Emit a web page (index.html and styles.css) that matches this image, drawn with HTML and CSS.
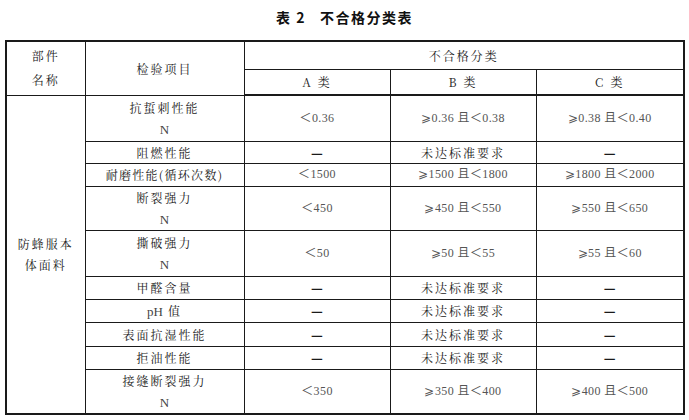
FILE: index.html
```html
<!DOCTYPE html>
<html lang="zh">
<head>
<meta charset="utf-8">
<title>不合格分类表</title>
<link rel="stylesheet" href="styles.css">
</head>
<body>
<h1 class="title">表 2&nbsp;&nbsp;&nbsp;不合格分类表</h1>
<table class="grid">
  <colgroup>
    <col class="c-part"><col class="c-item"><col class="c-a"><col class="c-b"><col class="c-c">
  </colgroup>
  <thead>
    <tr class="h1">
      <th rowspan="2" class="head-two">部件<br>名称</th>
      <th rowspan="2">检验项目</th>
      <th colspan="3">不合格分类</th>
    </tr>
    <tr class="h2">
      <th>A 类</th><th>B 类</th><th>C 类</th>
    </tr>
  </thead>
  <tbody>
    <tr class="r-47">
      <td rowspan="10" class="part two">防蜂服本<br>体面料</td>
      <td class="item two">抗蜇刺性能<br><span class="lat">N</span></td>
      <td class="num">＜0.36</td>
      <td class="num">⩾0.36 且＜0.38</td>
      <td class="num">⩾0.38 且＜0.40</td>
    </tr>
    <tr class="r-22">
      <td class="item">阻燃性能</td>
      <td class="dash">—</td>
      <td class="item">未达标准要求</td>
      <td class="dash">—</td>
    </tr>
    <tr class="r-23">
      <td class="item tight">耐磨性能(循环次数)</td>
      <td class="num">＜1500</td>
      <td class="num">⩾1500 且＜1800</td>
      <td class="num">⩾1800 且＜2000</td>
    </tr>
    <tr class="r-45">
      <td class="item two">断裂强力<br><span class="lat">N</span></td>
      <td class="num">＜450</td>
      <td class="num">⩾450 且＜550</td>
      <td class="num">⩾550 且＜650</td>
    </tr>
    <tr class="r-47b">
      <td class="item two">撕破强力<br><span class="lat">N</span></td>
      <td class="num">＜50</td>
      <td class="num">⩾50 且＜55</td>
      <td class="num">⩾55 且＜60</td>
    </tr>
    <tr class="r-23">
      <td class="item">甲醛含量</td>
      <td class="dash">—</td>
      <td class="item">未达标准要求</td>
      <td class="dash">—</td>
    </tr>
    <tr class="r-22">
      <td class="item"><span class="lat">pH</span> 值</td>
      <td class="dash">—</td>
      <td class="item">未达标准要求</td>
      <td class="dash">—</td>
    </tr>
    <tr class="r-24">
      <td class="item">表面抗湿性能</td>
      <td class="dash">—</td>
      <td class="item">未达标准要求</td>
      <td class="dash">—</td>
    </tr>
    <tr class="r-23">
      <td class="item">拒油性能</td>
      <td class="dash">—</td>
      <td class="item">未达标准要求</td>
      <td class="dash">—</td>
    </tr>
    <tr class="r-43">
      <td class="item two">接缝断裂强力<br><span class="lat">N</span></td>
      <td class="num">＜350</td>
      <td class="num">⩾350 且＜400</td>
      <td class="num">⩾400 且＜500</td>
    </tr>
  </tbody>
</table>
</body>
</html>
```

FILE: styles.css
```css
html, body {
  margin: 0;
  padding: 0;
  background: #ffffff;
}

body {
  width: 689px;
  height: 420px;
  overflow: hidden;
  font-family: "Noto Serif CJK SC", "Noto Sans CJK SC", "Liberation Serif", serif;
  color: #222;
}

.title {
  margin: 0;
  padding-top: 8px;
  height: 40px;
  box-sizing: border-box;
  text-align: center;
  font-family: "Noto Sans CJK SC", "Liberation Sans", sans-serif;
  font-size: 14px;
  font-weight: 700;
  line-height: 18px;
  letter-spacing: 1.5px;
  color: #111;
}

.grid {
  margin-left: 5px;
  width: 678px;
  table-layout: fixed;
  border-collapse: collapse;
  border: 2px solid #1a1a1a;
}

.c-part { width: 79px; }
.c-item { width: 159px; }
.c-a { width: 146px; }
.c-b { width: 146px; }
.c-c { width: 148px; }

.grid th,
.grid td {
  border: 1px solid #1a1a1a;
  padding: 0;
  text-align: center;
  vertical-align: middle;
  font-weight: 400;
  font-size: 12px;
  line-height: 21px;
  letter-spacing: 2px;
  white-space: nowrap;
}

.grid thead tr.h2 th {
  border-bottom: 2px solid #1a1a1a;
}

.grid tr.h1 { height: 28px; }
.grid tr.h2 { height: 26px; }
.grid tr.r-22 { height: 22px; }
.grid tr.r-23 { height: 23px; }
.grid tr.r-24 { height: 24px; }
.grid tr.r-43 { height: 43px; }
.grid tr.r-45 { height: 44px; }
.grid tr.r-47 { height: 46px; }
.grid tr.r-47b { height: 46px; }

.grid .head-two {
  line-height: 24px;
}

.grid .two {
  line-height: 21px;
}

.grid .item.tight {
  letter-spacing: 1.3px;
}

.lat {
  font-family: "Liberation Serif", serif;
  font-size: 13px;
  letter-spacing: 0;
  color: #444;
}

.grid td.num {
  font-family: "Liberation Serif", "DejaVu Serif", "Noto Sans CJK SC", serif;
  font-size: 12px;
  letter-spacing: 0.4px;
  color: #555;
}

.grid td.dash {
  font-family: "Noto Sans CJK SC", sans-serif;
  font-size: 13px;
  font-weight: 700;
  letter-spacing: 0;
  color: #1a1a1a;
}
```
